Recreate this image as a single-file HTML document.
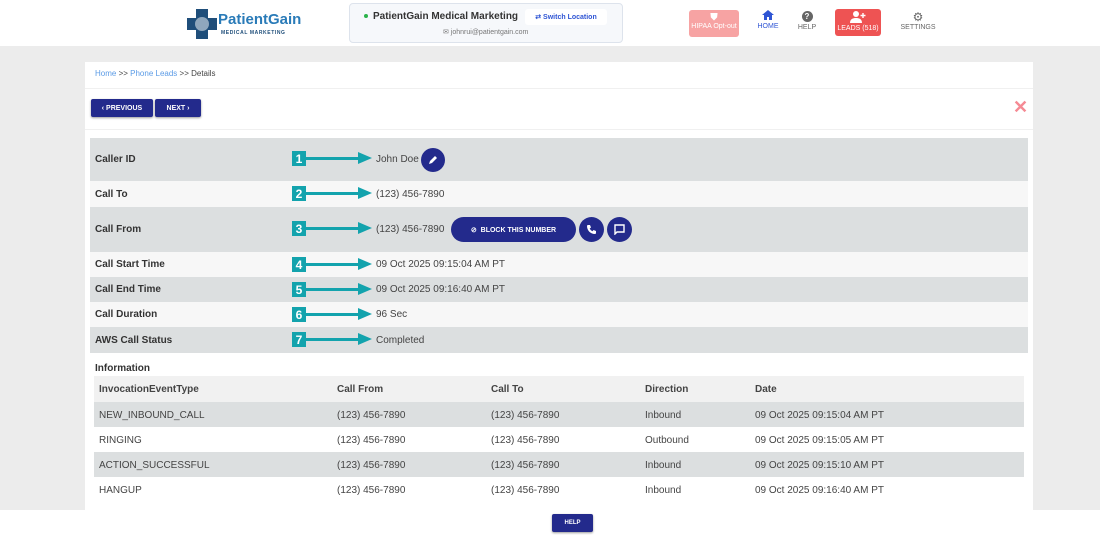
<!DOCTYPE html>
<html><head><style>
*{margin:0;padding:0;box-sizing:border-box}
body{width:1100px;height:535px;background:#ececec;font-family:"Liberation Sans",sans-serif;position:relative;overflow:hidden;font-size:10px;color:#333}
.abs{position:absolute}
.hdr{left:0;top:0;width:1100px;height:46px;background:#fff}
.card{left:85px;top:62px;width:948px;height:450px;background:#fff}
.btn{background:#232a8c;color:#fff;font-weight:bold;font-size:7px;display:flex;align-items:center;justify-content:center;border-radius:2px;box-shadow:0 1px 2px rgba(0,0,0,.4)}
.row{left:90px;width:938px;display:flex;align-items:center;font-size:10px}
.row b{position:absolute;left:5px;color:#333}
.row span{position:absolute;left:286px;color:#444}
.g{background:#dcdfe0}.l{background:#f7f7f7}
.num{width:14px;height:15px;background:#13a3ad;color:#fff;font-weight:bold;font-size:12px;display:flex;align-items:center;justify-content:center;left:292px}
.arr{left:306px;height:3px;width:55px;background:#13a3ad}
.tip{left:358px;width:0;height:0;border-top:6px solid transparent;border-bottom:6px solid transparent;border-left:14px solid #13a3ad}
.tr{left:94px;width:930px;height:25px;font-size:10px;color:#444}
.tr div{position:absolute;top:8px}
.c1{left:5px}.c2{left:243px}.c3{left:397px}.c4{left:551px}.c5{left:661px}
.circ{width:24px;height:24px;border-radius:50%;background:#232a8c;display:flex;align-items:center;justify-content:center}
</style></head><body>
<div class="abs hdr"></div>
<div class="abs" style="left:187px;top:7px;width:30px;height:34px">
<svg width="30" height="34"><path d="M9 2h12v9h9v12h-9v9H9v-9H0V11h9z" fill="#1f4e7a"/><circle cx="15" cy="17" r="7" fill="#fff" opacity=".5"/></svg></div>
<div class="abs" style="left:218px;top:11px;font-size:15px;color:#2a7bb8;font-weight:bold">PatientGain</div>
<div class="abs" style="left:221px;top:30px;font-size:5px;color:#1f4e7a;font-weight:bold;letter-spacing:.6px">MEDICAL MARKETING</div>
<div class="abs" style="left:349px;top:3px;width:274px;height:40px;background:#f6f8fb;border:1px solid #dde3ec;border-radius:4px"></div>
<div class="abs" style="left:364px;top:14px;width:4px;height:4px;border-radius:50%;background:#2bb34a"></div>
<div class="abs" style="left:373px;top:11px;font-size:10px;font-weight:bold;color:#333">PatientGain Medical Marketing</div>
<div class="abs" style="left:525px;top:9px;width:82px;height:16px;background:#fff;border-radius:3px;color:#2f55d4;font-size:7px;font-weight:bold;display:flex;align-items:center;justify-content:center">⇄ Switch Location</div>
<div class="abs" style="left:443px;top:28px;font-size:7px;color:#777">✉ johnrui@patientgain.com</div>
<div class="abs" style="left:689px;top:10px;width:50px;height:27px;background:#f7a3a3;border-radius:3px;color:#fff;font-size:7px;text-align:center;padding-top:2px"><span style="font-size:10px">⛊</span><br>HIPAA Opt-out</div>
<div class="abs" style="left:755px;top:9px;width:26px;text-align:center;color:#2f55d4;font-size:7px"><svg width="12" height="12" viewBox="0 0 12 12"><path d="M6 1L0 6h2v5h3V8h2v3h3V6h2z" fill="#2f55d4"/></svg><br>HOME</div>
<div class="abs" style="left:795px;top:11px;width:24px;text-align:center;color:#666;font-size:7px"><span style="display:inline-block;width:11px;height:11px;border-radius:50%;background:#666;color:#fff;font-size:8px;line-height:11px;font-weight:bold">?</span><br><span style="line-height:12px">HELP</span></div>
<div class="abs" style="left:835px;top:9px;width:46px;height:27px;background:#ee5353;border-radius:3px;color:#fff;font-size:7px;text-align:center;padding-top:2px"><svg width="16" height="12" viewBox="0 0 16 12"><circle cx="6" cy="3" r="3" fill="#fff"/><path d="M0 12c0-4 3-5 6-5s6 1 6 5z" fill="#fff"/><path d="M13 2v5M10.5 4.5h5" stroke="#fff" stroke-width="1.4"/></svg><br>LEADS (518)</div>
<div class="abs" style="left:898px;top:10px;width:40px;text-align:center;color:#666;font-size:7px"><span style="font-size:12px">⚙</span><br>SETTINGS</div>
<div class="abs card"></div>
<div class="abs" style="left:95px;top:69px;font-size:8px;color:#444"><span style="color:#5b9be6">Home</span> &gt;&gt; <span style="color:#5b9be6">Phone Leads</span> &gt;&gt; Details</div>
<div class="abs" style="left:85px;top:88px;width:948px;height:1px;background:#f0f0f0"></div>
<div class="abs btn" style="left:91px;top:99px;width:62px;height:18px">‹ PREVIOUS</div>
<div class="abs btn" style="left:155px;top:99px;width:46px;height:18px">NEXT ›</div>
<div class="abs" style="left:1013px;top:97px;color:#f58a94;font-size:18px;font-weight:bold">✕</div>
<div class="abs" style="left:85px;top:129px;width:948px;height:1px;background:#f0f0f0"></div>

<div class="abs row g" style="top:138px;height:43px"><b>Caller ID</b><span>John Doe</span></div>
<div class="abs circ" style="left:421px;top:148px"><svg width="10" height="10"><path d="M1 9l1-3 5-5 2 2-5 5z" fill="#fff"/></svg></div>
<div class="abs row l" style="top:181px;height:26px"><b>Call To</b><span>(123) 456-7890</span></div>
<div class="abs row g" style="top:207px;height:45px"><b>Call From</b><span>(123) 456-7890</span></div>
<div class="abs" style="left:451px;top:217px;width:125px;height:25px;border-radius:13px;background:#232a8c;color:#fff;font-size:7px;font-weight:bold;display:flex;align-items:center;justify-content:center">⊘&nbsp; BLOCK THIS NUMBER</div>
<div class="abs circ" style="left:579px;top:217px;width:25px;height:25px"><svg width="11" height="11" viewBox="0 0 11 11"><path d="M2 1l2 0 1 2.5-1.3 1c.6 1.3 1.5 2.2 2.8 2.8l1-1.3L10 7v2c0 .6-.5 1-1 1C4.5 10 1 6.5 1 2c0-.5.4-1 1-1z" fill="#fff"/></svg></div>
<div class="abs circ" style="left:607px;top:217px;width:25px;height:25px"><svg width="11" height="11"><path d="M1 1h9v7H3l-2 2z" fill="none" stroke="#fff" stroke-width="1.4"/></svg></div>
<div class="abs row l" style="top:252px;height:25px"><b>Call Start Time</b><span>09 Oct 2025 09:15:04 AM PT</span></div>
<div class="abs row g" style="top:277px;height:25px"><b>Call End Time</b><span>09 Oct 2025 09:16:40 AM PT</span></div>
<div class="abs row l" style="top:302px;height:25px"><b>Call Duration</b><span>96 Sec</span></div>
<div class="abs row g" style="top:327px;height:26px"><b>AWS Call Status</b><span>Completed</span></div>

<div class="abs num" style="top:151px">1</div><div class="abs arr" style="top:157px"></div><div class="abs tip" style="top:152px"></div>
<div class="abs num" style="top:186px">2</div><div class="abs arr" style="top:192px"></div><div class="abs tip" style="top:187px"></div>
<div class="abs num" style="top:221px">3</div><div class="abs arr" style="top:227px"></div><div class="abs tip" style="top:222px"></div>
<div class="abs num" style="top:257px">4</div><div class="abs arr" style="top:263px"></div><div class="abs tip" style="top:258px"></div>
<div class="abs num" style="top:282px">5</div><div class="abs arr" style="top:288px"></div><div class="abs tip" style="top:283px"></div>
<div class="abs num" style="top:307px">6</div><div class="abs arr" style="top:313px"></div><div class="abs tip" style="top:308px"></div>
<div class="abs num" style="top:332px">7</div><div class="abs arr" style="top:338px"></div><div class="abs tip" style="top:333px"></div>

<div class="abs" style="left:95px;top:363px;font-size:10px;font-weight:bold;color:#333">Information</div>
<div class="abs tr" style="top:376px;height:26px;background:#f1f1f1;font-weight:bold;color:#444"><div class="c1">InvocationEventType</div><div class="c2">Call From</div><div class="c3">Call To</div><div class="c4">Direction</div><div class="c5">Date</div></div>
<div class="abs tr g" style="top:402px"><div class="c1">NEW_INBOUND_CALL</div><div class="c2">(123) 456-7890</div><div class="c3">(123) 456-7890</div><div class="c4">Inbound</div><div class="c5">09 Oct 2025 09:15:04 AM PT</div></div>
<div class="abs tr" style="top:427px"><div class="c1">RINGING</div><div class="c2">(123) 456-7890</div><div class="c3">(123) 456-7890</div><div class="c4">Outbound</div><div class="c5">09 Oct 2025 09:15:05 AM PT</div></div>
<div class="abs tr g" style="top:452px"><div class="c1">ACTION_SUCCESSFUL</div><div class="c2">(123) 456-7890</div><div class="c3">(123) 456-7890</div><div class="c4">Inbound</div><div class="c5">09 Oct 2025 09:15:10 AM PT</div></div>
<div class="abs tr" style="top:477px"><div class="c1">HANGUP</div><div class="c2">(123) 456-7890</div><div class="c3">(123) 456-7890</div><div class="c4">Inbound</div><div class="c5">09 Oct 2025 09:16:40 AM PT</div></div>

<div class="abs" style="left:0;top:510px;width:1100px;height:25px;background:#fff"></div>
<div class="abs btn" style="left:552px;top:514px;width:41px;height:18px;font-size:6px">HELP</div>
</body></html>
